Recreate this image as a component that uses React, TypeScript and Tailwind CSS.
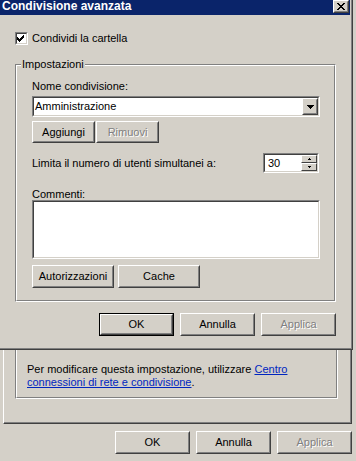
import React from "react";

// classic 3D edges
const raised =
  "border border-t-white border-l-white border-r-[#404040] border-b-[#404040]";
const raisedIn =
  "border border-t-[#d4d0c8] border-l-[#d4d0c8] border-r-[#808080] border-b-[#808080]";
const sunken =
  "border border-t-[#808080] border-l-[#808080] border-r-white border-b-white";
const sunkenIn =
  "border border-t-[#404040] border-l-[#404040] border-r-[#d4d0c8] border-b-[#d4d0c8]";

const Pix: React.FC<{ rows: string[] }> = ({ rows }) => (
  <svg
    width={rows[0].length}
    height={rows.length}
    shapeRendering="crispEdges"
    className="block"
  >
    {rows.flatMap((r, y) =>
      r
        .split("")
        .map((c, x) =>
          c === "X" ? (
            <rect key={`${x}-${y}`} x={x} y={y} width={1} height={1} fill="#000" />
          ) : null
        )
    )}
  </svg>
);

const CLOSE = ["XX....XX", ".XX..XX.", "..XXXX..", "...XX...", "..XXXX..", ".XX..XX.", "XX....XX"];
const CHECK = [".......", "......X", ".....XX", "X...XXX", "XX.XXX.", "XXXXX..", ".XXX...", "..X...."];
const DOWN = ["XXXXXXX", ".XXXXX.", "..XXX..", "...X..."];
const UP_S = ["..X..", ".XXX."];
const DOWN_S = [".XXX.", "..X.."];

const Btn: React.FC<{
  label: string;
  className: string;
  disabled?: boolean;
  def?: boolean;
}> = ({ label, className, disabled, def }) => {
  const face = (
    <div className={`h-full ${raised}`}>
      <div
        className={`h-full ${raisedIn} flex items-center justify-center ${
          disabled ? "text-[#808080] [text-shadow:1px_1px_0_#fff]" : "text-black"
        }`}
      >
        {label}
      </div>
    </div>
  );
  return def ? (
    <div className={`${className} border border-black`}>{face}</div>
  ) : (
    <div className={className}>{face}</div>
  );
};

const GroupBox: React.FC<{ className: string; children: React.ReactNode }> = ({
  className,
  children,
}) => (
  <div className={`${className} ${sunken}`}>
    <div className="h-full border border-t-white border-l-white border-r-[#808080] border-b-[#808080]">
      {children}
    </div>
  </div>
);

const FrontDialog: React.FC = () => (
  <div className="absolute left-0 top-0 w-[353px] h-[350px] border-r border-b border-[#404040]">
    <div className="h-full border-r border-b border-[#808080] bg-[#d4d0c8] flex flex-col">
      <div className="h-[15px] mr-[1px] bg-[#0a246a] flex justify-between">
        <div className="pl-[2px] text-white font-bold text-[12px] leading-[13px]">
          Condivisione avanzata
        </div>
        <div className={`w-[16px] h-[13px] mr-[1px] ${raised}`}>
          <div className={`h-full ${raisedIn} bg-[#d4d0c8] flex items-center justify-center`}>
            <Pix rows={CLOSE} />
          </div>
        </div>
      </div>

      <div className="mt-[17px] ml-[15px] flex items-center gap-[4px]">
        <div className={`w-[13px] h-[13px] ${sunken}`}>
          <div className={`h-full ${sunkenIn} bg-white`}>
            <Pix rows={CHECK} />
          </div>
        </div>
        <span className="leading-[13px]">Condividi la cartella</span>
      </div>

      <div className="mt-[19px] ml-[15px] relative">
        <span className="absolute left-[6px] top-[-6px] px-[1px] bg-[#d4d0c8] leading-[13px] z-10">
          Impostazioni
        </span>
        <GroupBox className="w-[321px] h-[238px]">
          <div className="pl-[15px] pt-[14px] flex flex-col">
            <div className="leading-[13px]">Nome condivisione:</div>
            <div className={`mt-[3px] w-[288px] h-[21px] ${sunken}`}>
              <div className={`h-full ${sunkenIn} bg-white flex items-center justify-between`}>
                <span className="pl-[1px] leading-[13px]">Amministrazione</span>
                <div className={`w-[16px] h-[17px] ${raised}`}>
                  <div className={`h-full ${raisedIn} bg-[#d4d0c8] flex items-center justify-center`}>
                    <Pix rows={DOWN} />
                  </div>
                </div>
              </div>
            </div>
            <div className="mt-[4px] flex gap-[1px]">
              <Btn label="Aggiungi" className="w-[63px] h-[22px]" />
              <Btn label="Rimuovi" className="w-[63px] h-[22px]" disabled />
            </div>
            <div className="mt-[10px] w-[288px] h-[20px] flex items-center justify-between pr-[1px]">
              <span className="leading-[13px]">Limita il numero di utenti simultanei a:</span>
              <div className={`w-[56px] h-[20px] ${sunken}`}>
                <div className={`h-full ${sunkenIn} bg-white flex items-center justify-between`}>
                  <span className="pl-[3px] leading-[13px]">30</span>
                  <div className="w-[16px] h-full flex flex-col">
                    <div className={`h-[8px] ${raised}`}>
                      <div className="h-full bg-[#d4d0c8] flex items-center justify-center">
                        <Pix rows={UP_S} />
                      </div>
                    </div>
                    <div className={`h-[8px] ${raised}`}>
                      <div className="h-full bg-[#d4d0c8] flex items-center justify-center">
                        <Pix rows={DOWN_S} />
                      </div>
                    </div>
                  </div>
                </div>
              </div>
            </div>
            <div className="mt-[16px] leading-[11px]">Commenti:</div>
            <div className={`w-[288px] h-[59px] ${sunken}`}>
              <div className={`h-full ${sunkenIn} bg-white`} />
            </div>
            <div className="mt-[6px] flex gap-[4px]">
              <Btn label="Autorizzazioni" className="w-[82px] h-[23px]" />
              <Btn label="Cache" className="w-[82px] h-[23px]" />
            </div>
          </div>
        </GroupBox>
      </div>

      <div className="mt-[11px] pl-[99px] flex gap-[6px]">
        <Btn label="OK" className="w-[75px] h-[23px]" def />
        <Btn label="Annulla" className="w-[75px] h-[23px]" />
        <Btn label="Applica" className="w-[75px] h-[23px]" disabled />
      </div>
    </div>
  </div>
);

export default function App() {
  return (
    <div className="w-[356px] h-[461px] bg-[#d4d0c8] relative overflow-hidden font-['Liberation_Sans',Arial,sans-serif] text-[11px] text-black">
      <div className="flex flex-col h-full">
        <div className="ml-[3px] mt-[300px] w-[349px] h-[124px] border-l border-l-white border-r border-b border-r-[#404040] border-b-[#404040]">
          <div className="h-full border-r border-b border-[#808080] flex flex-col justify-end pb-[23px] pl-[11px]">
            <GroupBox className="w-[323px] h-[80px]">
              <div className="h-full flex flex-col justify-end pl-[10px] pb-[8px] leading-[13px]">
                <div>
                  Per modificare questa impostazione, utilizzare{" "}
                  <span className="text-[#0026c0] underline">Centro</span>
                </div>
                <div>
                  <span className="text-[#0026c0] underline">connessioni di rete e condivisione</span>.
                </div>
              </div>
            </GroupBox>
          </div>
        </div>
        <div className="mt-[7px] pr-[4px] flex justify-end gap-[6px]">
          <Btn label="OK" className="w-[75px] h-[23px]" />
          <Btn label="Annulla" className="w-[75px] h-[23px]" />
          <Btn label="Applica" className="w-[75px] h-[23px]" disabled />
        </div>
      </div>
      <FrontDialog />
    </div>
  );
}
